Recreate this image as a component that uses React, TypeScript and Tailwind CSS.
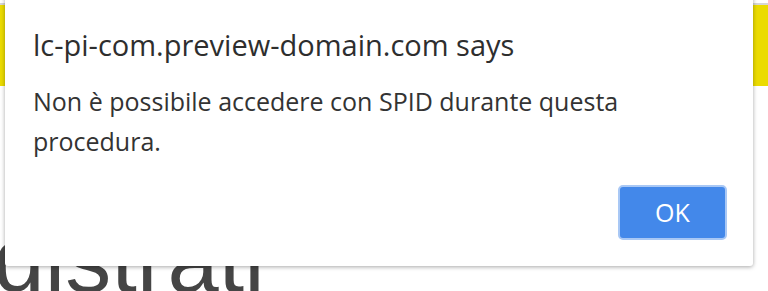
export default function App() {
  return (
    <div className="relative h-[291px] w-[768px] overflow-hidden bg-white font-['Open_Sans',sans-serif]">
      {/* page behind the alert */}
      <div className="pt-[3px]">
        <div className="h-[2px] bg-[#d6d6d6]" />
        <div className="h-[81px] bg-[#ebdb00]" />
        <div className="mt-[128px] -ml-[124px] whitespace-nowrap font-['Liberation_Sans',sans-serif] text-[92px] leading-none text-[#454545]">
          Registrati
        </div>
      </div>

      {/* alert dialog */}
      <div className="absolute left-[5px] top-[-10px] flex h-[276px] w-[748px] flex-col rounded-b-[3px] bg-white pl-[28px] pr-[26px] shadow-[0_1px_4px_rgba(0,0,0,0.35)]">
        <div className="mt-[35px] text-[29px] leading-[40px] text-[#2e2e2e]">lc-pi-com.preview-domain.com says</div>
        <div className="mt-[16px] w-[640px] text-[25px] leading-[40px] text-[#333]">
          Non è possibile accedere con SPID durante questa procedura.
        </div>
        <div className="mt-auto mb-[26px] flex justify-end">
          <button className="h-[55px] w-[109px] rounded-[5px] border-2 border-[#a9c8f5] bg-[#4388ea] text-[25px] text-white">
            OK
          </button>
        </div>
      </div>
    </div>
  );
}
